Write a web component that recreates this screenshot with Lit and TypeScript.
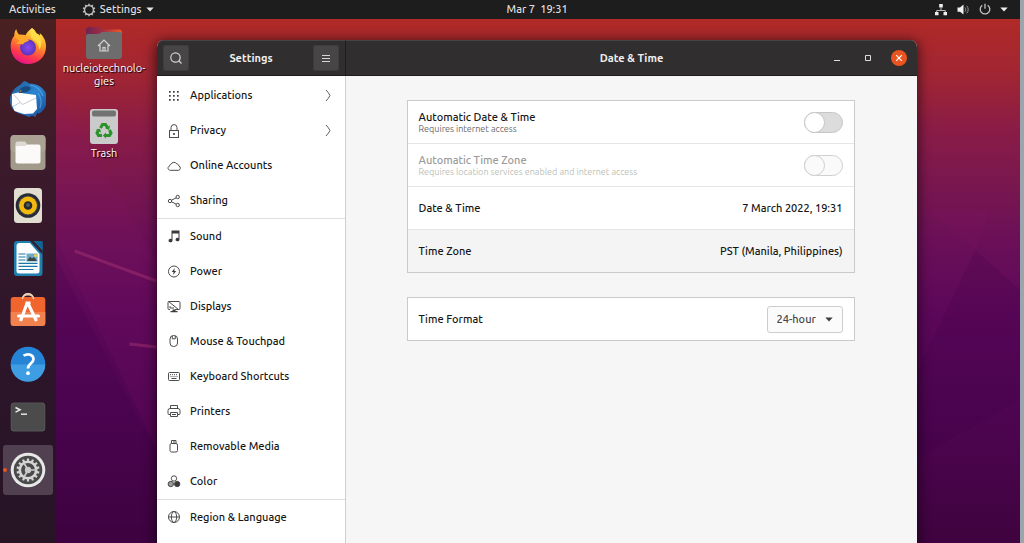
import { LitElement, html, css, svg, nothing, type TemplateResult } from "lit";
import { customElement } from "lit/decorators.js";
import { classMap } from "lit/directives/class-map.js";

type NavItem = { label: string; icon: TemplateResult; more?: boolean; endsGroup?: boolean };

const stroke = (body: TemplateResult) => svg`<g fill="none" stroke="#4c4c4c" stroke-width="1">${body}</g>`;

const navItems: NavItem[] = [
  {
    label: "Applications",
    more: true,
    icon: svg`<g fill="#3d3d3d">${[4, 8, 12].map((y) => [4, 8, 12].map((x) => svg`<rect x=${x - 1} y=${y - 1} width="1.7" height="1.7"/>`))}</g>`,
  },
  {
    label: "Privacy",
    more: true,
    icon: stroke(svg`<rect x="3.5" y="7.5" width="9" height="7"/><path d="M5 7.5V4.6a3 3 0 0 1 6 0v2.9"/><circle cx="8" cy="11" r="1" fill="#333" stroke="none"/>`),
  },
  {
    label: "Online Accounts",
    icon: stroke(svg`<path d="M4.3 12.3h7.9a2.2 2.2 0 0 0 .6-4.3c0-1.3-1-2-2-2A3.2 3.2 0 0 0 5 6.4c-.9 0-1.500.7-1.400 1.700-2.300.6-2.100 4 .7 4.200z"/>`),
  },
  {
    label: "Sharing",
    endsGroup: true,
    icon: stroke(svg`<circle cx="4" cy="8" r="1.700"/><circle cx="11.700" cy="4" r="1.700"/><circle cx="11.700" cy="12" r="1.700"/><path d="m5.500 7.200 4.700-2.400M5.500 8.800l4.700 2.400"/>`),
  },
  {
    label: "Sound",
    icon: svg`<path fill="#3a3a3a" d="M5.500 1.500h8v9.300a2 1.700 0 1 1-1-1.700V4.500h-6v7.300a2 1.700 0 1 1-1-1.700z"/>`,
  },
  {
    label: "Power",
    icon: stroke(svg`<circle cx="8" cy="7.500" r="5.500"/><path fill="#3d3d3d" stroke="none" d="M8.800 4 5.700 8.100h1.900l-.5 3 3.100-4.200H8.300z"/>`),
  },
  {
    label: "Displays",
    icon: stroke(svg`<path d="M4 10.500h-1a1 1 0 0 1-1-1v-6a1 1 0 0 1 1-1h10a1 1 0 0 1 1 1v6a1 1 0 0 1-1 1H9M2.500 2.500l10 8"/><path d="M4 7v2h4"/><path fill="#3d3d3d" stroke="none" d="M6.500 10.500h3V12h2v1.300h-7V12h2z"/>`),
  },
  {
    label: "Mouse & Touchpad",
    icon: stroke(svg`<rect x="4" y="1.500" width="7.500" height="11" rx="3.500"/><path d="M6.300 1.800v3h3v-3"/>`),
  },
  {
    label: "Keyboard Shortcuts",
    icon: stroke(svg`<rect x="2.500" y="3.500" width="11" height="8" rx="1"/><path stroke-dasharray="1 1" d="M4 5.700h8M4.500 7.600h7"/><path d="M5.500 9.500h5"/>`),
  },
  {
    label: "Printers",
    icon: stroke(svg`<path d="M4.500 4.500v-3h7v3M4.500 10.500H3a1 1 0 0 1-1-1v-3a2 2 0 0 1 2-2h8a2 2 0 0 1 2 2v3a1 1 0 0 1-1 1h-1.500M4.500 8.500h7v4h-7zM6 10.500h4"/>`),
  },
  {
    label: "Removable Media",
    icon: stroke(svg`<rect x="4" y="4.500" width="7.500" height="8.500" rx="1.500"/><path d="M5.500 4.500v-3H10v3M7 3h2"/>`),
  },
  {
    label: "Color",
    endsGroup: true,
    icon: svg`<g stroke="#4c4c4c"><circle cx="8" cy="4.500" r="2.700" fill="none"/><circle cx="4.800" cy="10" r="2.700" fill="#999"/><circle cx="11.200" cy="10" r="2.700" fill="#3a3a3a"/></g>`,
  },
  {
    label: "Region & Language",
    icon: stroke(svg`<circle cx="8" cy="7" r="5.500"/><ellipse cx="8" cy="7" rx="2.600" ry="5.500"/><path d="M2.500 7h11"/>`),
  },
];

const cog = (cx: number, cy: number, r: number, n: number, w: number, h: number) =>
  Array.from({ length: n }, (_, i) => svg`<rect x=${cx - w / 2} y=${cy - r - h} width=${w} height=${h + 1} transform="rotate(${(i * 360) / n} ${cx} ${cy})"/>`);

const dockItems: { name: string; active?: boolean; art: TemplateResult }[] = [
  {
    name: "Firefox",
    art: svg`
      <defs>
        <linearGradient id="ff" x1=".75" y1="0" x2=".35" y2="1"><stop offset="0" stop-color="#fff44f"/><stop offset=".4" stop-color="#ff9a26"/><stop offset=".75" stop-color="#ff3a4a"/><stop offset="1" stop-color="#e5128c"/></linearGradient>
        <radialGradient id="fp"><stop offset="0" stop-color="#8a4bf5"/><stop offset="1" stop-color="#5a35b8"/></radialGradient>
      </defs>
      <path fill="url(#ff)" d="M22 0c2 1.500 3.300 3.300 4 5.500 1.500 0 3 .7 4 2 0-.8 0-1.500-.4-2.500C33.500 8 36 13 36 18.500 36 29 28 36 18 36S.7 28.500.7 18.500C.7 13 3 9 4.200 8c0-3.300 1-5.500 2-7 .5 2 1.300 4 2.800 5.500 2 .2 4.500 0 6.500.7C16.500 5 19 2 22 0z"/>
      <circle cx="18" cy="19.500" r="8" fill="url(#fp)"/>
      <path fill="#ffa62b" d="M4 8c3-1.500 7-1.300 11.500-.5 1 1 1.500 3.500 3.500 5-2 1.500-5 1.500-6 4-2-.5-5-1-7.500-.5C7 15 8 13.500 9.500 13z"/>
      <path fill="#ffe14a" d="M22 0c3.500 2 4.500 6 8 9 2 4 2 9-1 13 0-5-2-8-5-9.500-4-3-4.500-8-2-12.500z" opacity=".85"/>`,
  },
  {
    name: "Thunderbird",
    art: svg`
      <defs><linearGradient id="tb" x1="0" y1="0" x2="1" y2="1"><stop offset="0" stop-color="#1f5c97"/><stop offset=".5" stop-color="#2b83d0"/><stop offset="1" stop-color="#174a94"/></linearGradient></defs>
      <path fill="url(#tb)" d="M14 0c2 .3 4 1.300 5 2.500 9-.5 18 6 18 15 0 8-4 13-8 15l-2-.5-1.500 4-3.500-1.500-3 1.500-5-2C4 32 0 26 0 19 0 12 5 6 10 4z"/>
      <path fill="#fff" d="m2 13 6-1.500 10 1.500 8 1 1 14-4 4.500-9 .5-9.500-3L2 24z"/>
      <path fill="none" stroke="#b8bcc5" stroke-width=".8" d="m4 14 8.500 9.500L26 17M3 25.500l7-4"/>
      <path fill="#174b83" d="M9 9c3-4 9-5 12-2-2 4-6 5-12 5z"/><circle cx="10.500" cy="10" r="1.300" fill="#8c6a3b"/>
      <path fill="none" stroke="#65b8f4" stroke-width="1.200" d="M20 4c6 1 11 5 13 11M28 12c3 4 4 9 2 15" opacity=".6"/>`,
  },
  {
    name: "Files",
    art: svg`<rect x=".5" y="1" width="35" height="35" rx="4" fill="#a29a8b"/><rect x=".5" y="1" width="35" height="17" rx="4" fill="#aaa293"/>
      <rect x="5.500" y="10.500" width="25" height="19" rx="2" fill="#fbfaf8"/><path fill="#dedad2" d="M5.500 13V9.500a2 2 0 0 1 2-2H15l2 2.500-2 2H7.500z"/>`,
  },
  {
    name: "Rhythmbox",
    art: svg`<rect x="4" y="1" width="28" height="35" rx="3.500" fill="#e2ddd1"/><circle cx="18" cy="18.500" r="12.300" fill="#262a32"/><circle cx="18" cy="18.500" r="10" fill="#3e414a"/><circle cx="18" cy="18.500" r="9" fill="#f3b90d"/><circle cx="18" cy="18.500" r="4.300" fill="#26282b"/><circle cx="18" cy="18" r="2" fill="#55585b"/>`,
  },
  {
    name: "LibreOffice Writer",
    art: svg`<rect x="4" y="1" width="28.500" height="35" rx="3" fill="#1d7fae"/><path fill="#fafcfd" d="M6.500 6a3 3 0 0 1 3-3H20l9.500 11v17a2.500 2.500 0 0 1-2.500 2.500H9A2.500 2.500 0 0 1 6.500 31z"/>
      <path fill="#2d2436" d="M20 1h4l8.500 9.500v4z"/><path fill="#0f6596" d="M24 1h8.500v8.500z"/>
      <path stroke="#1b77a5" stroke-width="1.200" d="M8.500 14h7M8.500 17h7M8.500 20h7M8.500 23.300h19M8.500 26.300h19M8.500 29.500h15"/><rect x="16.500" y="13.500" width="11" height="8" fill="#6ea9c5"/><path fill="#3a4548" d="m17 21 3-4.500 2 2 2-1.500 3 4z"/><circle cx="25.500" cy="15.500" r="1.500" fill="#f4d24b"/>`,
  },
  {
    name: "Ubuntu Software",
    art: svg`<path fill="none" stroke="#e9c9a4" stroke-width="1.600" d="M12.500 7c0-7 11-7 11 0"/><rect x=".7" y="4" width="34.600" height="29" rx="3" fill="#f0642d"/><path fill="none" stroke="#f6dcc0" stroke-width="1.400" d="M12.500 6c0-7 11-7 11 0"/><path fill="#f28150" d="M.7 19h34.600v11a3 3 0 0 1-3 3H3.700a3 3 0 0 1-3-3z"/>
      <path fill="none" stroke="#fff" stroke-width="3.200" d="M17 10.500 10.500 28M18 10.500 26.500 28"/><path stroke="#fff" stroke-width="3" stroke-linecap="round" d="M8.500 23h20"/><path stroke="#fff" stroke-width="3" d="M15.500 10h5"/>`,
  },
  {
    name: "Help",
    art: svg`<circle cx="18" cy="18" r="17.300" fill="#2584d6"/><path fill="#3e9de3" d="M.7 18.500a17.300 17.300 0 0 0 34.600 0z"/><path fill="none" stroke="#fff" stroke-width="2.700" d="M13.500 9.700c5-3 10-.7 10 3.600 0 4-5.500 4-5.500 9.200"/><circle cx="18" cy="27.200" r="1.900" fill="#fff"/>`,
  },
  {
    name: "Terminal",
    art: svg`<rect x=".7" y="3.500" width="34.600" height="29" rx="3.500" fill="#565656"/><rect x="1.700" y="4.500" width="32.600" height="27" rx="3" fill="#4b4b4b"/><path fill="none" stroke="#eee" stroke-width="1.500" d="m5.500 8.500 4.500 2.300-4.500 2.300"/><path stroke="#ddd" stroke-width="1.600" d="M11 15.200h6"/>`,
  },
  {
    name: "Settings",
    active: true,
    art: svg`<circle cx="18" cy="18" r="17.300" fill="#e8e8e8"/><circle cx="18" cy="18" r="14.300" fill="#4a4a4a"/><g fill="#d5d5d5">${cog(18, 18, 9, 14, 2.2, 2.5)}</g>
      <circle cx="18" cy="18" r="8.200" fill="none" stroke="#d5d5d5" stroke-width="2.600"/><circle cx="18" cy="18" r="3.200" fill="#c9c9c9"/><path stroke="#c9c9c9" stroke-width="1.700" d="M18 18h8M18 18l-4-7M18 18l-4 7"/>`,
  },
];

@customElement("setting-row")
class SettingRow extends LitElement {
  static properties = {
    label: {},
    note: {},
    disabled: { type: Boolean, reflect: true },
    shaded: { type: Boolean, reflect: true },
  };
  declare label: string;
  declare note?: string;
  declare disabled: boolean;
  declare shaded: boolean;

  static styles = css`
    :host {
      display: flex;
      align-items: center;
      justify-content: space-between;
      gap: 12px;
      min-height: 42px;
      padding: 0 11px;
      background: #fff;
      color: #161616;
    }
    :host([shaded]) {
      background: #f4f4f4;
    }
    .text {
      display: flex;
      flex-direction: column;
      line-height: 13px;
    }
    .note {
      font-size: 9px;
      line-height: 10px;
      font-weight: 400;
      color: #6c6c6c;
    }
    :host([disabled]) .label {
      color: #9b9b9b;
    }
    :host([disabled]) .note {
      color: #bbbfb8;
    }
  `;

  render() {
    return html`<div class="text">
        <span class="label">${this.label}</span>
        ${this.note ? html`<span class="note">${this.note}</span>` : nothing}
      </div>
      <slot></slot>`;
  }
}

@customElement("app-root")
export class AppRoot extends LitElement {
  static styles = css`
    :host {
      display: grid;
      grid-template-rows: 19px 1fr;
      height: 100vh;
      overflow: hidden;
      box-sizing: border-box;
      border-right: 4px solid #9aa5ae;
      background: #480450;
      font-family: Ubuntu, "Noto Sans", "Open Sans", sans-serif;
      font-size: 11px;
      font-weight: 500;
      line-height: 13px;
      color: #161616;
    }
    button,
    select {
      font: inherit;
      color: inherit;
      border: 0;
      padding: 0;
      margin: 0;
      background: none;
    }
    a {
      color: inherit;
      text-decoration: none;
    }
    svg {
      display: block;
      flex: none;
    }
    .topbar {
      display: grid;
      grid-template-columns: 1.13fr auto 1fr;
      align-items: center;
      padding: 0 12px 0 9px;
      background: #1d1d1d;
      color: #dedede;
    }
    .topbar-group {
      display: flex;
      align-items: center;
    }
    .topbar-group button {
      display: flex;
      align-items: center;
      gap: 4px;
    }
    .start {
      gap: 26px;
    }
    .clock {
      white-space: pre;
    }
    .end {
      justify-self: end;
    }
    .end button {
      gap: 8px;
    }
    .workspace {
      position: relative;
      display: grid;
      grid-template-columns: 56px 1fr;
      min-height: 0;
      background: linear-gradient(
        #b02a27,
        #a02533 11%,
        #8a1c46 21%,
        #78174f 32%,
        #6b1058 42%,
        #5b0759 57%,
        #500553 72%,
        #3f033f
      );
    }
    .wallpaper {
      position: absolute;
      width: 100%;
      height: 100%;
    }
    .dock {
      position: relative;
      display: flex;
      flex-direction: column;
      align-items: center;
      gap: 3px;
      padding-top: 2px;
      background: linear-gradient(#4a2021, #3b1a2b 28%, #2d152a 62%, #261425);
    }
    .dock button {
      display: grid;
      place-items: center;
      width: 50px;
      height: 50px;
      flex: none;
      border-radius: 3px;
    }
    .dock .active {
      position: relative;
      background: #51404f;
    }
    .active::before {
      content: "";
      position: absolute;
      left: 0;
      width: 4px;
      height: 4px;
      border-radius: 50%;
      background: #e95420;
    }
    .icons {
      position: relative;
      display: flex;
      flex-direction: column;
      gap: 20px;
      width: 96px;
      padding-top: 6px;
    }
    .shortcut {
      display: flex;
      flex-direction: column;
      align-items: center;
      gap: 2px;
      color: #fff;
      text-align: center;
      font-weight: 400;
      text-shadow: 1px 1px 1px #000;
    }
    .window {
      position: absolute;
      inset: 21px 103px 0 157px;
      display: grid;
      grid-template-columns: 189px 1fr;
      grid-template-rows: 36px 1fr;
      border-radius: 7px 7px 0 0;
      overflow: hidden;
      background: #f6f6f6;
    }
    .shadow {
      position: absolute;
      inset: 21px 103px 0 157px;
      border-radius: 7px 7px 0 0;
      box-shadow: 0 2px 12px 2px rgb(0 0 0 / 55%);
    }
    .bar {
      display: grid;
      align-items: center;
      box-sizing: border-box;
      background: #302e2e;
      border-top: 1px solid #474545;
      border-bottom: 1px solid #1f1c1f;
      color: #efefef;
      text-align: center;
    }
    .bar h1,
    .bar h2 {
      margin: 0;
      font-size: 11px;
      font-weight: 700;
    }
    .bar-side {
      grid-template-columns: 26px 1fr 26px;
      padding: 0 6px;
      border-right: 1px solid #1f1c1f;
    }
    .bar-main {
      grid-template-columns: 1fr auto 1fr;
      padding: 0 10px;
    }
    .bar-main h2 {
      grid-column: 2;
    }
    .tool {
      display: grid;
      place-items: center;
      height: 26px;
      border-radius: 3px;
      background: #474545;
      box-shadow: inset 0 0 0 1px #3e3c3c;
    }
    .controls {
      display: flex;
      align-items: center;
      justify-content: flex-end;
      gap: 15px;
    }
    .controls button {
      display: grid;
      place-items: center;
      width: 16px;
      height: 16px;
    }
    .controls .close {
      border-radius: 50%;
      background: #e95420;
    }
    .nav {
      padding-top: 2px;
      background: #fff;
      border-right: 1px solid #cfcfcf;
      min-height: 0;
      overflow: hidden;
    }
    .nav ul {
      list-style: none;
      margin: 0;
      padding: 0;
    }
    .nav a {
      display: flex;
      align-items: center;
      gap: 8px;
      height: 35px;
      padding: 0 13px 0 9px;
    }
    .nav span {
      flex: 1;
    }
    .ends-group {
      border-bottom: 1px solid #dedede;
    }
    .panel {
      display: flex;
      flex-direction: column;
      align-items: center;
      gap: 24px;
      padding: 24px 26px 24px 24px;
    }
    .card {
      display: flex;
      flex-direction: column;
      gap: 1px;
      box-sizing: border-box;
      width: 100%;
      max-width: 448px;
      border: 1px solid #cacaca;
      background: #e6e6e6;
    }
    .switch {
      appearance: none;
      flex: none;
      box-sizing: border-box;
      width: 39px;
      height: 21px;
      margin: 0;
      border: 1px solid #c6c6c6;
      border-radius: 11px;
      background: #dcdcdc;
    }
    .switch::before {
      content: "";
      display: block;
      box-sizing: border-box;
      width: 21px;
      height: 21px;
      margin: -1px;
      border: 1px solid #c6c6c6;
      border-radius: 50%;
      background: #fff;
    }
    .switch:checked::before {
      margin-left: 17px;
    }
    .switch:disabled,
    .switch:disabled::before {
      background: #fafafa;
      border-color: #cfcfcf;
    }
    .picker {
      display: grid;
      align-items: center;
    }
    .picker > * {
      grid-area: 1 / 1;
    }
    .picker svg {
      justify-self: end;
      margin-right: 10px;
      pointer-events: none;
    }
    .picker select {
      appearance: none;
      box-sizing: border-box;
      width: 76px;
      height: 27px;
      padding: 0 24px 0 9px;
      border: 1px solid #cdcdcd;
      border-radius: 3px;
      background: #fbfbfb;
      color: #474747;
    }
  `;

  private icon(body: TemplateResult, size = 16) {
    return html`<svg width=${size} height=${size} viewBox="0 0 ${size} ${size}" aria-hidden="true">${body}</svg>`;
  }

  private caret(color: string) {
    return html`<svg width="8" height="5" viewBox="0 0 8 5" aria-hidden="true"><path fill=${color} d="M.3.5h7.400L4 4.500z"/></svg>`;
  }

  private topbar() {
    return html`<header class="topbar">
      <div class="topbar-group start">
        <button>Activities</button>
        <button>
          <svg width="14" height="14" viewBox="0 0 14 14" aria-hidden="true">
            <circle cx="7" cy="7" r="4.500" fill="none" stroke="#bcbcbc" stroke-width="1.500"/>
            <g fill="#bcbcbc">${cog(7, 7, 5, 10, 1.5, 1.3)}</g>
          </svg>
          Settings ${this.caret("#e6e6e6")}
        </button>
      </div>
      <button class="clock">Mar 7  19:31</button>
      <div class="topbar-group end">
        <button aria-label="System menu">
          <svg width="14" height="14" viewBox="0 0 14 14" aria-hidden="true">
            <path fill="#eee" d="M5.200 1h3.600v3.500H5.200zM1 9h3.500v3.200H1zM9.500 9H13v3.200H9.500z"/>
            <path fill="none" stroke="#bbb" d="M7 4.500V7M2.700 9V7.500h8.600V9"/>
          </svg>
          <svg width="14" height="14" viewBox="0 0 14 14" aria-hidden="true">
            <path fill="#f0f0f0" d="M1.500 4.500H4l3.500-3v10L4 8.700H1.500z"/>
            <path fill="none" stroke="#999" d="M9 4.500c1 1.300 1 3 0 4.200M10.700 2.800c2 2.200 2 5.300 0 7.500"/>
          </svg>
          <svg width="14" height="14" viewBox="0 0 14 14" aria-hidden="true">
            <path fill="none" stroke="#c4c4c4" stroke-width="1.300" d="M4.300 2.200a4.800 4.800 0 1 0 5.400 0M7 .8v5"/>
          </svg>
          ${this.caret("#eee")}
        </button>
      </div>
    </header>`;
  }

  private shortcuts() {
    return html`<div class="icons">
      <a class="shortcut" href="#home">
        <svg width="36" height="35" viewBox="0 0 36 35" aria-hidden="true">
          <defs><linearGradient id="tab"><stop stop-color="#6e2350"/><stop offset=".45" stop-color="#a02e45"/><stop offset="1" stop-color="#ee5a28"/></linearGradient></defs>
          <path fill="url(#tab)" d="M0 5a3 3 0 0 1 3-3h10l4 2.500h16a3 3 0 0 1 3 3V13H0z"/>
          <path fill="#6d6d6d" d="M0 11a2 2 0 0 1 2-2h10.500L16 7h18a2 2 0 0 1 2 2v22a3 3 0 0 1-3 3H3a3 3 0 0 1-3-3z"/>
          <path fill="none" stroke="#d4d4d4" stroke-width="1.200" d="m12 21 6-6 6 6M14 20v6h8v-6M17 26v-3.500h2V26"/>
        </svg>
        <span>nucleiotechnolo-<br />gies</span>
      </a>
      <a class="shortcut" href="#trash">
        <svg width="30" height="37" viewBox="0 0 30 37" aria-hidden="true">
          <rect x="1" y="1" width="28" height="35" rx="3" fill="#cacaca"/>
          <rect x="3" y="2.500" width="24" height="6" rx="2" fill="#737373"/>
          <g fill="none" stroke="#2b922b" stroke-width="3">
            <path d="m11.500 20 2-3.500h3l2 3.200M20.500 22l1.500 3-1.500 2.500H16M13 27.500H9.500L8 25l1.500-3"/>
          </g>
          <path fill="#2b922b" d="m21 17.500-.8 4.500-4-1.700zM17 24.500v6l-3.200-3zM7 21.500l4-.8 1 4z"/>
        </svg>
        <span>Trash</span>
      </a>
    </div>`;
  }

  private sidebar() {
    return html`<nav class="nav" aria-label="Settings">
      <ul>
        ${navItems.map(
          (item) => html`<li class=${classMap({ "ends-group": !!item.endsGroup })}>
            <a href="#panel">
              ${this.icon(item.icon)}
              <span>${item.label}</span>
              ${item.more
                ? html`<svg width="7" height="13" viewBox="0 0 7 13" aria-hidden="true"><path fill="none" stroke="#5c5c5c" d="M1 1q2.500 2.500 4 5.500Q3.500 9.500 1 12"/></svg>`
                : nothing}
            </a>
          </li>`,
        )}
      </ul>
    </nav>`;
  }

  private panel() {
    return html`<main class="panel">
      <section class="card">
        <setting-row label="Automatic Date & Time" note="Requires internet access">
          <input class="switch" type="checkbox" role="switch" aria-label="Automatic Date & Time" />
        </setting-row>
        <setting-row label="Automatic Time Zone" note="Requires location services enabled and internet access" disabled>
          <input class="switch" type="checkbox" role="switch" aria-label="Automatic Time Zone" disabled />
        </setting-row>
        <setting-row label="Date & Time"><button>7 March 2022, 19:31</button></setting-row>
        <setting-row label="Time Zone" shaded><button>PST (Manila, Philippines)</button></setting-row>
      </section>
      <section class="card">
        <setting-row label="Time Format">
          <div class="picker">
            <select aria-label="Time Format">
              <option>24-hour</option>
              <option>AM / PM</option>
            </select>
            ${this.caret("#3d3d3d")}
          </div>
        </setting-row>
      </section>
    </main>`;
  }

  render() {
    return html`${this.topbar()}
      <div class="workspace">
        <svg class="wallpaper" viewBox="0 0 1024 524" preserveAspectRatio="none" aria-hidden="true">
          <path fill="#3b0046" opacity=".16" d="M56 238 157 436V524H56zM979 231l45 40v-60 170L910 445v-70z"/>
          <path fill="#8a1767" opacity=".12" d="M56 70 157 240V430L56 220zM930 190l49 41 15-40z"/>
          <path stroke="#9a2c6e" stroke-width="3" opacity=".6" d="m75 232 82 30M130 325l27 3"/>
        </svg>
        <nav class="dock" aria-label="Dock">
          ${dockItems.map(
            (item) => html`<button class=${classMap({ active: !!item.active })} aria-label=${item.name}>
              <svg width="36" height="37" viewBox="0 0 36 37" aria-hidden="true">${item.art}</svg>
            </button>`,
          )}
        </nav>
        ${this.shortcuts()}
        <div class="shadow"></div>
        <div class="window">
          <div class="bar bar-side">
            <button class="tool" aria-label="Search">
              <svg width="14" height="14" viewBox="0 0 14 14" aria-hidden="true"><g fill="none" stroke="#d5d5d5" stroke-width="1.200"><circle cx="6.500" cy="6.500" r="4.700"/><path d="m10 10 2.500 2.500"/></g></svg>
            </button>
            <h1>Settings</h1>
            <button class="tool" aria-label="Menu">
              <svg width="8" height="9" viewBox="0 0 8 9" aria-hidden="true"><path stroke="#d5d5d5" d="M0 1.500h8M0 4.500h8M0 7.500h8"/></svg>
            </button>
          </div>
          <div class="bar bar-main">
            <h2>Date &amp; Time</h2>
            <div class="controls">
              <button aria-label="Minimize"><svg width="8" height="8" viewBox="0 0 8 8" aria-hidden="true"><path stroke="#ddd" d="M1 6.500h6"/></svg></button>
              <button aria-label="Maximize"><svg width="8" height="8" viewBox="0 0 8 8" aria-hidden="true"><path fill="none" stroke="#ddd" d="M1.500 1.500h5v5h-5z"/></svg></button>
              <button class="close" aria-label="Close"><svg width="8" height="8" viewBox="0 0 8 8" aria-hidden="true"><path stroke="#fff" stroke-width="1.200" d="m1.200 1.200 5.600 5.600M6.800 1.200 1.200 6.800"/></svg></button>
            </div>
          </div>
          ${this.sidebar()} ${this.panel()}
        </div>
      </div>`;
  }
}
